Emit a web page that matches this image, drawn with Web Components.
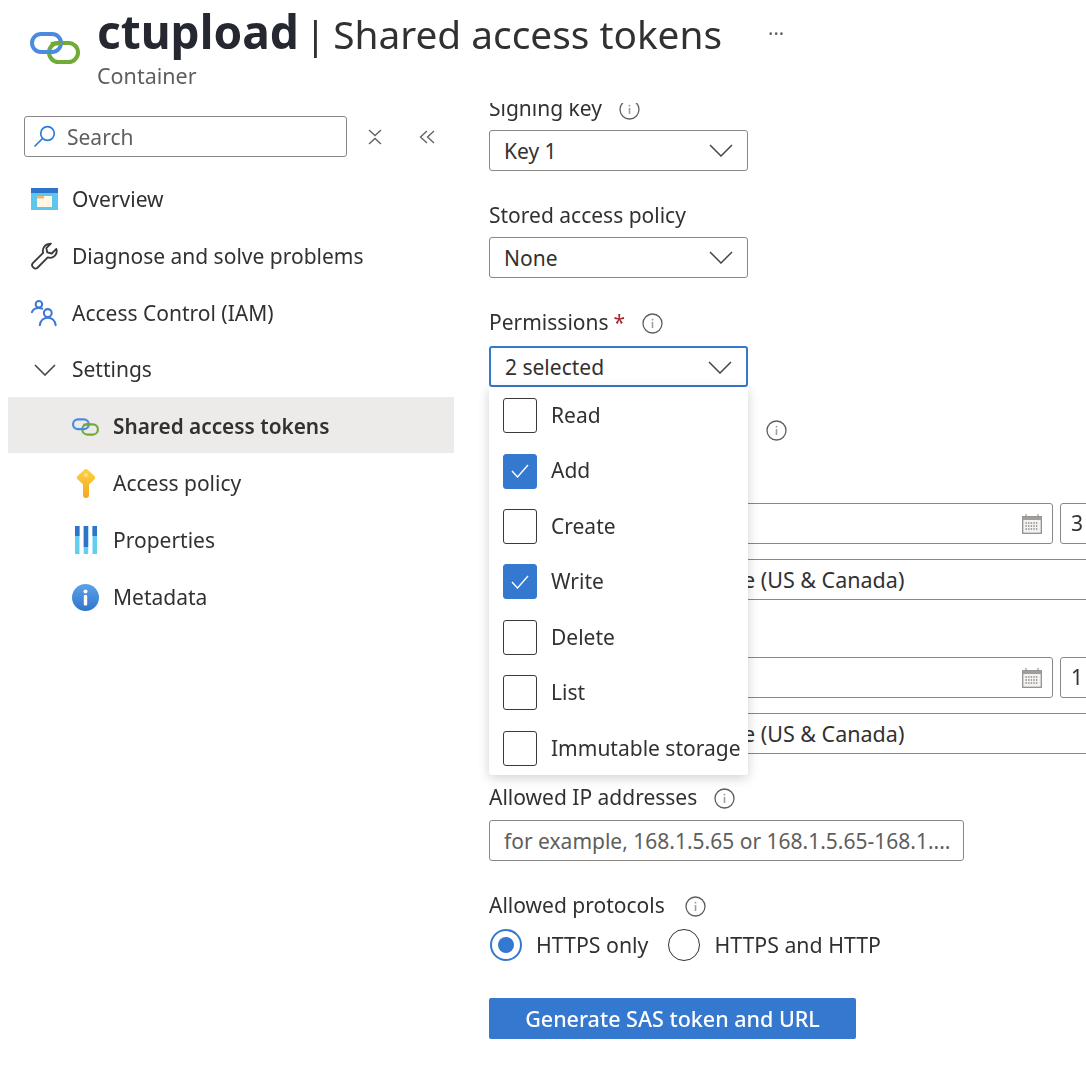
<!DOCTYPE html>
<html lang="en">
<head>
<meta charset="utf-8">
<title>ctupload | Shared access tokens</title>
<style>
html, body { margin: 0; height: 100%; overflow: hidden; background: #fff; }
body { font: 21px/1.3 "Noto Sans", sans-serif; color: #323130; }
</style>
</head>
<body>
<az-page>
	<az-header slot="header" name="ctupload" blade="Shared access tokens" kind="Container"></az-header>
	<az-sidebar slot="side">
		<az-nav icon="overview">Overview</az-nav>
		<az-nav icon="wrench">Diagnose and solve problems</az-nav>
		<az-nav icon="people">Access Control (IAM)</az-nav>
		<az-nav icon="chevron">Settings</az-nav>
		<az-nav icon="link" sub selected>Shared access tokens</az-nav>
		<az-nav icon="key" sub>Access policy</az-nav>
		<az-nav icon="bars" sub>Properties</az-nav>
		<az-nav icon="info" sub>Metadata</az-nav>
	</az-sidebar>
	<az-form slot="main">
		<az-field label="Signing key" info><az-box kind="select">Key 1</az-box></az-field>
		<az-field label="Stored access policy"><az-box kind="select">None</az-box></az-field>
		<az-field label="Permissions" info required style="--gap:7px;--after:25px">
			<az-box kind="select" focused>2 selected
				<az-menu slot="menu">
					<az-check>Read</az-check>
					<az-check checked>Add</az-check>
					<az-check>Create</az-check>
					<az-check checked>Write</az-check>
					<az-check>Delete</az-check>
					<az-check>List</az-check>
					<az-check>Immutable storage</az-check>
				</az-menu>
			</az-box>
		</az-field>
		<az-field info style="--indent:260px;--after:57px"></az-field>
		<az-datetime time="3"></az-datetime>
		<az-box kind="select" style="width:640px;margin:15px 0 57px;padding:0 0 0 253px;font-size:21.500px">e (US &amp; Canada)</az-box>
		<az-datetime time="1"></az-datetime>
		<az-box kind="select" style="width:640px;margin:15px 0 26px;padding:0 0 0 253px;font-size:21.500px">e (US &amp; Canada)</az-box>
		<az-field label="Allowed IP addresses" info style="--gap:6px"><az-box placeholder style="width:475px">for example, 168.1.5.65 or 168.1.5.65-168.1....</az-box></az-field>
		<az-field label="Allowed protocols" info style="--gap:7px;--after:37px;--info-gap:20px">
			<az-radios><az-radio checked>HTTPS only</az-radio><az-radio>HTTPS and HTTP</az-radio></az-radios>
		</az-field>
		<az-button>Generate SAS token and URL</az-button>
	</az-form>
</az-page>
<script>
const grad = `<defs>
<linearGradient id="b" x1="0" y1="0" x2="0" y2="1"><stop offset="0" stop-color="#5ea0ef"/><stop offset="1" stop-color="#3a74d0"/></linearGradient>
</defs>`;
const chain = `<svg viewBox="0 0 50 32" width="W" height="H" fill="none" stroke-width="4">
<rect x="19" y="11" width="29" height="19" rx="9.5" stroke="#6fab35"/>
<rect x="2" y="2" width="29" height="18" rx="9" stroke="#4a8ae0"/>
<path d="M21 12.2c3-1 8-1.200 11-.6" stroke="#6fab35"/>
</svg>`;
const icons = {
	overview: `<svg viewBox="0 0 27 22" width="27" height="22"><rect width="27" height="22" fill="#5ec6ea"/><rect width="27" height="5" fill="#2f74cc"/><rect x="6" y="8" width="15" height="11" fill="#fff6e4"/><rect x="6" y="8" width="7" height="2.500" fill="#f5b65f"/></svg>`,
	wrench: `<svg viewBox="0 0 28 28" width="28" height="28" fill="none" stroke="#3b3a39" stroke-width="1.900" stroke-linejoin="round"><path d="M19.500 1.600a7 7 0 0 0-6.900 9.100L1.900 21.400a2.900 2.900 0 0 0 0 3.900l.9.900a2.900 2.900 0 0 0 3.900 0l10.700-10.700a7 7 0 0 0 8.900-8.800l-4.800 4.700-4.600-1.100-1-4.500 4.700-4.600z"/></svg>`,
	people: `<svg viewBox="0 0 29 29" width="29" height="29" fill="none" stroke="#3f77d8" stroke-width="2.200" stroke-linecap="round"><circle cx="8.500" cy="4.500" r="3.500"/><path d="M1 13c1-3 4-4.500 7.500-4.500 1.500 0 2.500.3 3.500.8"/><circle cx="18" cy="14" r="4.200"/><path d="M9.500 27c.5-5 4-8 8.500-8s8 3 8.500 8"/></svg>`,
	chevron: `<svg viewBox="0 0 22 12" width="22" height="12" fill="none" stroke="#484644" stroke-width="1.600"><path d="M1 1l10 10L21 1"/></svg>`,
	link: chain.replace('W', '27').replace('H', '18'),
	key: `<svg viewBox="0 0 20 29" width="20" height="29">${grad.replace(/#5ea0ef/,'#ffd23f').replace(/#3a74d0/,'#f2a71f')}<path d="M10 0c1 0 1.500.5 2.500 1.500L18 6.500c1.500 1.300 1.500 3 0 4.300l-5 4.700v11c0 1.500-1.400 2.500-3 2.500s-3-1-3-2.500v-11L2 10.800C.5 9.500.5 7.800 2 6.500l5.500-5C8.500.5 9 0 10 0z" fill="url(#b)"/><circle cx="10" cy="6" r="2" fill="#fbe08a"/></svg>`,
	bars: `<svg viewBox="0 0 22 29" width="22" height="29"><g fill="#62d0ec"><rect width="4.500" height="28"/><rect x="8.700" width="4.500" height="28"/><rect x="17.500" width="4.500" height="28"/></g><g fill="#2f74cc"><rect width="4.500" height="10"/><rect x="8.700" width="4.500" height="21"/><rect x="17.500" width="4.500" height="10"/></g></svg>`,
	info: `<svg viewBox="0 0 27 27" width="27" height="27"><defs><linearGradient id="i" x1="0" y1="0" x2="0" y2="1"><stop offset="0" stop-color="#5ea2e8"/><stop offset="1" stop-color="#2f74cc"/></linearGradient></defs><circle cx="13.500" cy="13.500" r="13.500" fill="url(#i)"/><circle cx="13.500" cy="7.500" r="2" fill="#fff"/><rect x="11.800" y="11" width="3.400" height="10.500" rx="1" fill="#fff"/></svg>`,
	infoline: `<svg viewBox="0 0 21 21" width="21" height="21" fill="none"><circle cx="10.500" cy="10.500" r="9.500" stroke="#605e5c" stroke-width="1.300"/><rect x="9.700" y="9" width="1.600" height="6" fill="#a19f9d"/><rect x="9.700" y="5.800" width="1.600" height="1.700" fill="#a19f9d"/></svg>`,
	calendar: `<svg viewBox="0 0 20 20" width="20" height="20" fill="none"><rect x=".7" y="2.700" width="18.600" height="16.600" fill="#f3f2f1" stroke="#8a8886" stroke-width="1.200"/><rect x=".7" y="2.700" width="18.600" height="3.300" fill="#a19f9d"/><path d="M4 0v3M16 0v3" stroke="#8a8886"/><path d="M3.500 9h13M3.500 12h13M3.500 15h13" stroke="#8a8886" stroke-width="1.400" stroke-dasharray="1.400 1.200"/></svg>`
};

class AzBase extends HTMLElement {
	constructor() { super();
		this.attachShadow({mode: 'open'}).innerHTML = this.markup();
	}
}

class AzPage extends AzBase {
	markup(){ return `<style>
:host { display: block; height: 1068px; overflow: hidden; filter: blur(.45px); }
#body { display: flex; }
#side { width: 446px; margin-left: 8px; flex: none; }
/* the form is scrolled: the first label is cut by the top edge */
#main { flex: 1; padding-left: 35px; margin-top: 5px; height: 965px; overflow: hidden; }
</style>
<slot name="header"></slot>
<div id="body">
	<div id="side"><slot name="side"></slot></div>
	<div id="main"><slot name="main"></slot></div>
</div>` }
}

class AzHeader extends AzBase {
	markup(){ return `<style>
:host { display: flex; height: 98px; box-sizing: border-box; padding-left: 30px; }
#logo { width: 50px; margin-top: 32px; margin-right: 17px; flex: none; }
h1 { margin: 6px 0 0; font-size: 38.800px; line-height: 50px; font-weight: 400; color: #323130; white-space: nowrap; display: flex; align-items: baseline; }
b { font-size: 46px; font-weight: 700; color: #252830; }
#sep { margin: 0 7px 0 6px; }
#more { font-size: 20px; margin-left: 46px; color: #605e5c; position: relative; top: -8px; }
p { margin: -4px 0 0; font-size: 21.500px; line-height: 26px; color: #605e5c; }
</style>
<div id="logo">${chain.replace('W', '50').replace('H', '32')}</div>
<div>
	<h1><b id="name"></b><span id="sep">|</span><span id="blade"></span><span id="more">···</span></h1>
	<p id="kind"></p>
</div>` }
	connectedCallback(){
		let s = this.shadowRoot;
		s.querySelector('#name').textContent = this.getAttribute('name');
		s.querySelector('#blade').textContent = this.getAttribute('blade');
		s.querySelector('#kind').textContent = this.getAttribute('kind');
	}
}

class AzSidebar extends AzBase {
	markup(){ return `<style>
:host { display: block; }
#top { display: flex; align-items: center; padding: 18px 0 0 16px; height: 41px; margin-bottom: 12px; }
#search { box-sizing: border-box; width: 323px; height: 41px; border: 1.600px solid #8a8886; border-radius: 3px; display: flex; align-items: center; padding: 0 0 0 8px; color: #605e5c; }
#search svg { margin-right: 11px; }
#search span { padding-top: 2px; }
#x { margin-left: 20px; }
#dbl { margin-left: 36px; }
svg { display: block; flex: none; }
</style>
<div id="top">
	<div id="search">
		<svg viewBox="0 0 23 23" width="23" height="23" fill="none" stroke="#2f7bd8" stroke-width="1.700"><circle cx="14.500" cy="8.500" r="6.800"/><path d="M9.500 13.500L1.500 21.500"/></svg>
		<span>Search</span>
	</div>
	<svg id="x" viewBox="0 0 16 16" width="16" height="16" fill="none" stroke="#605e5c" stroke-width="1.300"><path d="M2 1l6 5.500L14 1M2 15l6-5.500L14 15"/></svg>
	<svg id="dbl" viewBox="0 0 16 14" width="16" height="14" fill="none" stroke="#605e5c" stroke-width="1.300"><path d="M8 1L1.500 7 8 13M15 1L8.500 7l6.500 6"/></svg>
</div>
<slot></slot>` }
}

class AzNav extends AzBase {
	markup(){ return `<style>
:host { display: flex; align-items: center; box-sizing: border-box; height: 56.900px; padding: 4px 0 0 16px; white-space: nowrap; }
:host([sub]) { padding-left: 57px; }
:host([selected]) { background: #edebe9; font-weight: 600; font-size: 20.800px; }
#ic { width: 48px; flex: none; display: flex; }
#ic span { width: 27px; display: flex; justify-content: center; align-items: center; margin-left: 7px; }
svg { display: block; }
</style>
<div id="ic"><span id="svg"></span></div><slot></slot>` }
	connectedCallback(){
		this.shadowRoot.querySelector('#svg').innerHTML = icons[this.getAttribute('icon')];
	}
}

class AzForm extends AzBase {
	markup(){ return `<style>
:host { display: block; margin-top: -12px; width: 640px; }
</style><slot></slot>` }
}

class AzField extends AzBase {
	markup(){ return `<style>
:host { display: block; margin-bottom: var(--after, 27px); }
#label { display: flex; align-items: center; box-sizing: border-box; height: 34px; margin-bottom: var(--gap, 5px); padding: 2px 0 0 var(--indent, 0); white-space: nowrap; }
#req { color: #a4262c; margin-left: 5px; display: none; }
:host([required]) #req { display: inline; }
#info { display: none; margin-left: var(--info-gap, 17px); }
:host([info]) #info { display: block; }
svg { display: block; }
</style>
<div id="label"><span id="text"></span><span id="req">*</span><span id="info">${icons.infoline}</span></div>
<slot></slot>` }
	connectedCallback(){
		this.shadowRoot.querySelector('#text').textContent = this.getAttribute('label') || '';
	}
}

class AzBox extends AzBase {
	markup(){ return `<style>
:host { display: flex; position: relative; box-sizing: border-box; width: 259px; height: 41px; border: 1.600px solid #8a8886; border-radius: 3px; align-items: center; padding: 3px 0 0 14px; white-space: nowrap; background: #fff; }
:host([focused]) { border: 2px solid #3478d0; }
:host([placeholder]) { color: #605e5c; }
svg { position: absolute; right: 14px; top: 13px; display: none; }
:host([kind=select]) svg { display: block; }
#menu { position: absolute; left: -2px; top: 39px; z-index: 5; }
</style>
<slot></slot>
<svg viewBox="0 0 24 13" width="24" height="13" fill="none" stroke="#484644" stroke-width="1.500"><path d="M1 1l11 11L23 1"/></svg>
<div id="menu"><slot name="menu"></slot></div>` }
}

class AzMenu extends AzBase {
	markup(){ return `<style>
:host { display: block; width: 259px; height: 388px; background: #fff; box-shadow: 0 3px 12px rgba(0,0,0,.18); border-radius: 0 0 3px 3px; }
</style><slot></slot>` }
}

class AzCheck extends AzBase {
	markup(){ return `<style>
:host { display: flex; align-items: center; box-sizing: border-box; height: 55.430px; padding: 2px 0 0 14px; white-space: nowrap; }
#box { box-sizing: border-box; width: 34px; height: 35px; border: 1.600px solid #3b3a39; border-radius: 3px; margin-right: 14px; flex: none; display: flex; align-items: center; justify-content: center; }
:host([checked]) #box { background: #3478d0; border-color: #3478d0; }
svg { display: none; }
:host([checked]) svg { display: block; }
</style>
<div id="box"><svg viewBox="0 0 18 14" width="18" height="14" fill="none" stroke="#fff" stroke-width="1.400"><path d="M1 7l5.500 6L17 1"/></svg></div>
<slot></slot>` }
}

class AzDatetime extends AzBase {
	markup(){ return `<style>
:host { display: flex; gap: 7px; }
#date, #time { box-sizing: border-box; height: 41px; border: 1.600px solid #8a8886; border-radius: 3px; display: flex; align-items: center; }
#date { width: 564px; flex: none; justify-content: flex-end; padding-right: 10px; }
#time { width: 200px; flex: none; padding-left: 10px; }
</style>
<div id="date">${icons.calendar}</div><div id="time"></div>` }
	connectedCallback(){
		this.shadowRoot.querySelector('#time').textContent = this.getAttribute('time');
	}
}

class AzRadios extends AzBase {
	markup(){ return `<style>
:host { display: flex; gap: 19px; font-size: 21.300px; }
</style><slot></slot>` }
}

class AzRadio extends AzBase {
	markup(){ return `<style>
:host { display: flex; align-items: center; height: 32px; white-space: nowrap; padding-left: 1px; }
#dot { box-sizing: border-box; width: 32px; height: 32px; border-radius: 50%; border: 1.800px solid #323130; margin-right: 14px; display: flex; align-items: center; justify-content: center; }
:host([checked]) #dot { border: 2.400px solid #3478d0; }
:host([checked]) #dot::after { content: ""; width: 16px; height: 16px; border-radius: 50%; background: #3478d0; }
</style>
<div id="dot"></div><slot></slot>` }
}

class AzButton extends AzBase {
	markup(){ return `<style>
:host { display: flex; align-items: center; justify-content: center; width: 367px; height: 41px; background: #3478d0; color: #fff; border-radius: 2px; font-size: 21.500px; font-weight: 500; white-space: nowrap; }
</style><slot></slot>` }
}

customElements.define('az-page', AzPage);
customElements.define('az-header', AzHeader);
customElements.define('az-sidebar', AzSidebar);
customElements.define('az-nav', AzNav);
customElements.define('az-form', AzForm);
customElements.define('az-field', AzField);
customElements.define('az-box', AzBox);
customElements.define('az-menu', AzMenu);
customElements.define('az-check', AzCheck);
customElements.define('az-datetime', AzDatetime);
customElements.define('az-radios', AzRadios);
customElements.define('az-radio', AzRadio);
customElements.define('az-button', AzButton);
</script>
</body>
</html>
